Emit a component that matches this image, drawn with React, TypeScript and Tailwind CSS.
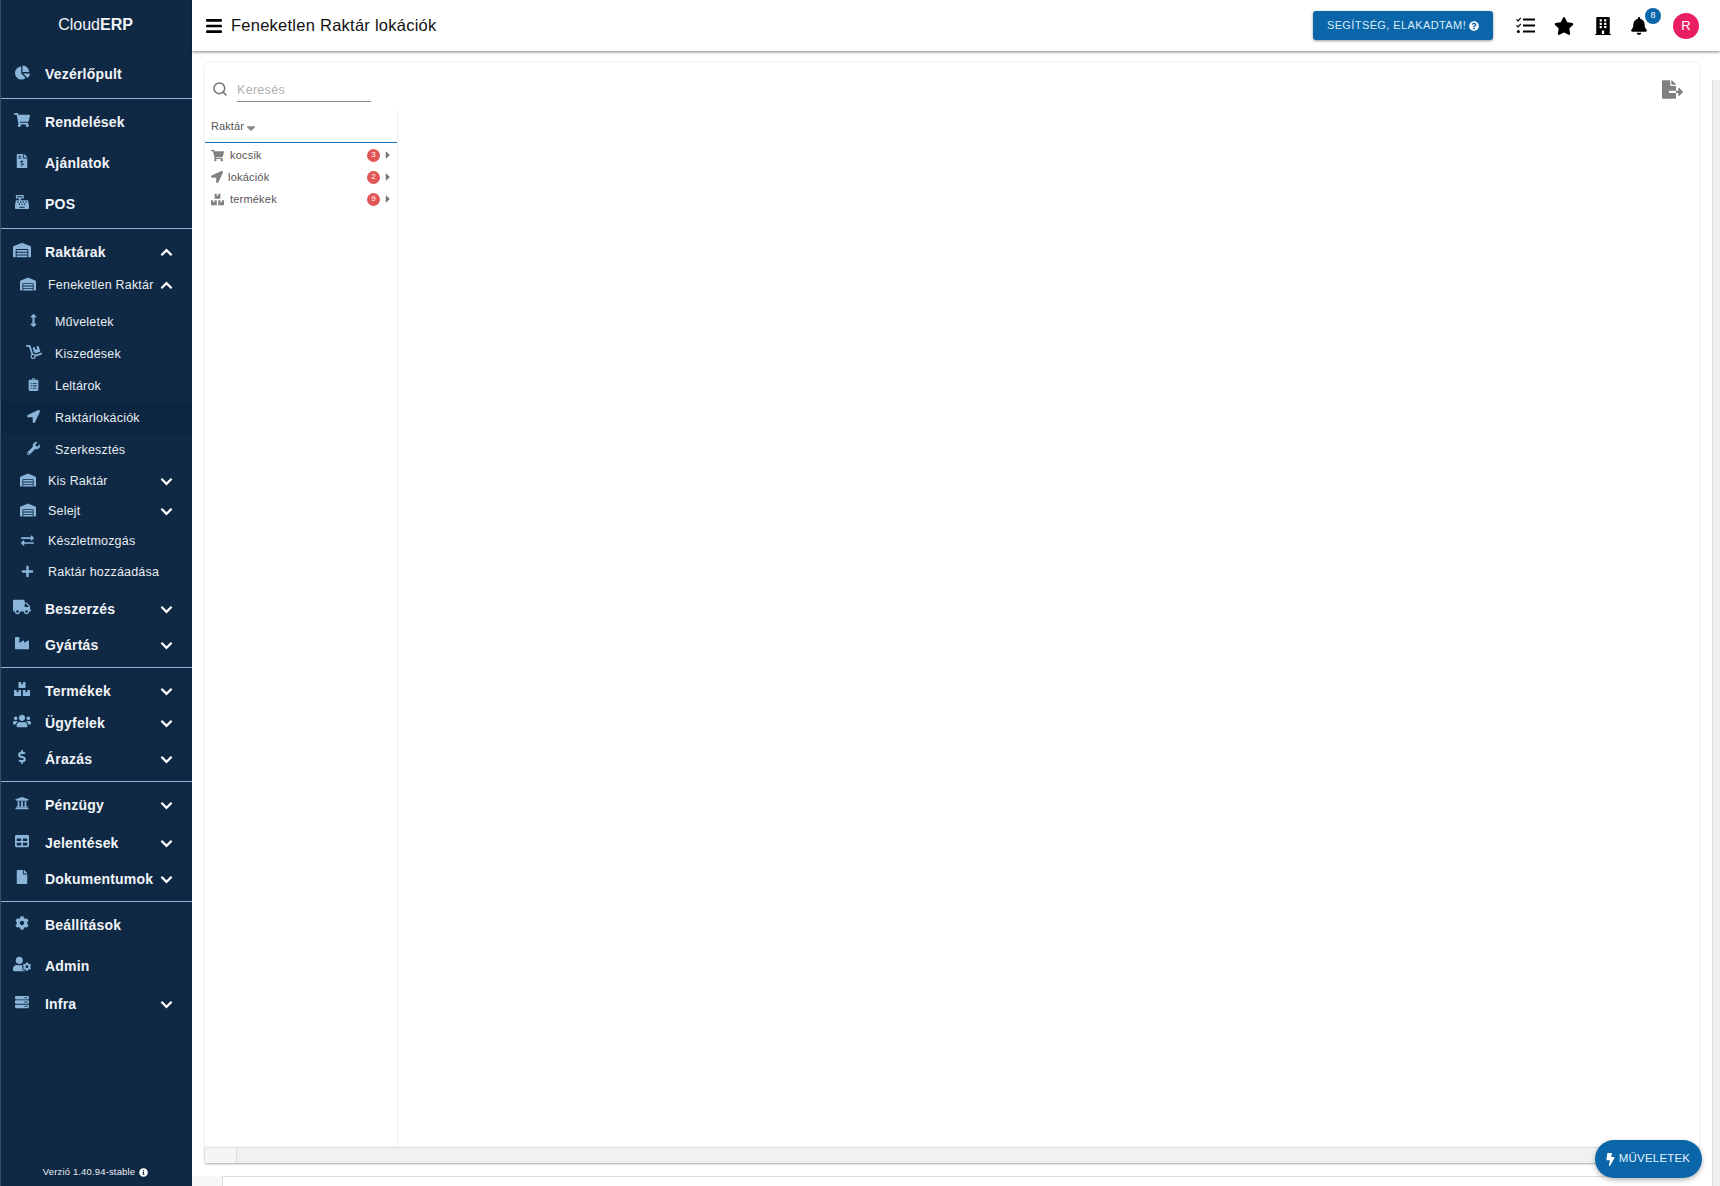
import React from 'react';
import { FaChartPie, FaShoppingCart, FaFileInvoiceDollar, FaCashRegister, FaWarehouse, FaArrowsAltV, FaDolly, FaClipboardList, FaLocationArrow, FaWrench, FaExchangeAlt, FaPlus, FaTruck, FaIndustry, FaBoxes, FaUsers, FaDollarSign, FaUniversity, FaTable, FaFile, FaCog, FaUserCog, FaServer, FaInfoCircle, FaQuestionCircle, FaStar, FaBuilding, FaBell, FaBolt, FaFileExport, FaBars, FaCaretDown, FaCaretRight } from 'react-icons/fa';
import { Search } from 'lucide-react';

type I = React.ComponentType<{ className?: string }>;

const Chevron = ({ up }: { up?: boolean }) => (
  <svg viewBox="0 0 14 9" className="w-[13px] h-[9px] shrink-0 absolute right-[19px] text-white" fill="none" stroke="currentColor" strokeWidth="2.4">
    <path d={up ? 'M1.5 7.5 7 2l5.5 5.5' : 'M1.5 1.5 7 7l5.5-5.5'} />
  </svg>
);

const Main = ({ icon: Icon, label, h, chev, up, s = 'text-[14px]' }: { icon: I; label: string; h: number; chev?: boolean; up?: boolean; s?: string }) => (
  <div className="relative flex items-center shrink-0" style={{ height: h }}>
    <div className="w-[44px] flex justify-center pr-[2px] shrink-0"><Icon className={`${s} text-[#8ab4d8] -translate-y-[2px]`} /></div>
    <span className="text-[14px] font-bold text-[#f2f5f8] tracking-[0.2px]">{label}</span>
    {chev && <Chevron up={up} />}
  </div>
);

const Sub = ({ icon: Icon, label, h, chev, up, s = 'text-[13px]' }: { icon: I; label: string; h: number; chev?: boolean; up?: boolean; s?: string }) => (
  <div className="relative flex items-center shrink-0" style={{ height: h }}>
    <div className="w-[47px] pl-[6px] flex justify-center shrink-0"><Icon className={`${s} text-[#8ab4d8] -translate-y-[1px]`} /></div>
    <span className="text-[12.5px] text-[#e8edf2] tracking-[0.2px]">{label}</span>
    {chev && <Chevron up={up} />}
  </div>
);

const Leaf = ({ icon: Icon, label, active, s = 'text-[13px]' }: { icon: I; label: string; active?: boolean; s?: string }) => (
  <div className={`flex items-center h-[32px] shrink-0 ${active ? 'bg-[#0c2540]' : ''}`}>
    <div className="w-[54px] pl-[11px] flex justify-center shrink-0"><Icon className={`${s} text-[#8ab4d8] -translate-y-[2px]`} /></div>
    <span className="text-[12.5px] text-[#e8edf2] tracking-[0.2px]">{label}</span>
  </div>
);

const Rule = () => <div className="h-px bg-[#8db4d6] shrink-0" />;

const Row = ({ icon: Icon, label, n, gap, s = 'text-[13px]' }: { icon: I; label: string; n: number; gap: string; s?: string }) => (
  <div className="flex items-center h-[22px] pl-[6px] pr-[3px] text-[#555]">
    <Icon className={`${s} text-[#808080] shrink-0`} />
    <span className={`text-[11px] ${gap} text-[#555] tracking-[0.2px]`}>{label}</span>
    <span className="ml-auto w-[13px] h-[13px] rounded-full bg-[#e25555] text-white text-[8px] flex items-center justify-center">{n}</span>
    <FaCaretRight className="text-[12px] text-[#777] ml-[2px]" />
  </div>
);

const Checklist = () => (
  <svg viewBox="0 0 19 17" className="ml-[23px] w-[19px] h-[17px] text-black" fill="none" stroke="currentColor">
    <path d="M7 2.5h12M7 8.5h12M7 14.5h12" strokeWidth="1.8" />
    <path d="M.5 2.3 2 3.8 4.8.8M.5 8.3 2 9.8 4.8 6.8" strokeWidth="1.2" />
    <circle cx="2.4" cy="14.5" r="1.5" fill="currentColor" stroke="none" />
  </svg>
);

export default function App() {
  return (
    <div className="flex h-[1186px] w-[1720px] overflow-hidden bg-white font-['Liberation_Sans',Arial,sans-serif]">
      <aside className="w-[192px] shrink-0 h-full bg-[#0f2945] border-l border-[#3d4f63] flex flex-col">
        <div className="h-[50px] flex items-center justify-center shrink-0 text-[16px] text-[#f2f5f8] pr-[2px]">Cloud<b>ERP</b></div>
        <Main icon={FaChartPie} label="Vezérlőpult" h={48} s="text-[15px]" />
        <Rule />
        <Main icon={FaShoppingCart} label="Rendelések" h={46} s="text-[16px]" />
        <Main icon={FaFileInvoiceDollar} label="Ajánlatok" h={36} />
        <Main icon={FaCashRegister} label="POS" h={46} />
        <div className="h-[1px] shrink-0" />
        <Rule />
        <Main icon={FaWarehouse} label="Raktárak" h={46} chev up s="text-[18px]" />
        <Sub icon={FaWarehouse} label="Feneketlen Raktár" h={20} chev up s="text-[16px]" />
        <div className="h-[11px] shrink-0" />
        <Leaf icon={FaArrowsAltV} label="Műveletek" />
        <Leaf icon={FaDolly} label="Kiszedések" s="text-[16px]" />
        <Leaf icon={FaClipboardList} label="Leltárok" />
        <Leaf icon={FaLocationArrow} label="Raktárlokációk" active />
        <Leaf icon={FaWrench} label="Szerkesztés" />
        <Sub icon={FaWarehouse} label="Kis Raktár" h={30} chev s="text-[16px]" />
        <Sub icon={FaWarehouse} label="Selejt" h={30} chev s="text-[16px]" />
        <Sub icon={FaExchangeAlt} label="Készletmozgás" h={30} />
        <Sub icon={FaPlus} label="Raktár hozzáadása" h={32} />
        <Main icon={FaTruck} label="Beszerzés" h={42} chev s="text-[18px]" />
        <Main icon={FaIndustry} label="Gyártás" h={30} chev />
        <div className="h-[7px] shrink-0" />
        <Rule />
        <div className="h-[3px] shrink-0" />
        <Main icon={FaBoxes} label="Termékek" h={40} chev s="text-[16px]" />
        <Main icon={FaUsers} label="Ügyfelek" h={24} chev s="text-[18px]" />
        <div className="h-[2px] shrink-0" />
        <Main icon={FaDollarSign} label="Árazás" h={44} chev />
        <Rule />
        <Main icon={FaUniversity} label="Pénzügy" h={46} chev />
        <Main icon={FaTable} label="Jelentések" h={30} chev />
        <Main icon={FaFile} label="Dokumentumok" h={42} chev />
        <div className="h-[1px] shrink-0" />
        <Rule />
        <Main icon={FaCog} label="Beállítások" h={46} />
        <Main icon={FaUserCog} label="Admin" h={36} s="text-[18px]" />
        <Main icon={FaServer} label="Infra" h={40} chev />
        <div className="mt-auto h-[28px] flex items-center justify-center gap-[4px] text-[9.5px] text-[#e8edf2] tracking-[0.15px] pr-[2px]">
          <span>Verzió 1.40.94-stable</span><FaInfoCircle className="text-[9px] text-white" />
        </div>
      </aside>

      <div className="relative flex-1 flex flex-col min-w-0 bg-white">
        <header className="h-[51px] shrink-0 flex items-center bg-white shadow-[0_1px_3px_rgba(0,0,0,0.5)] z-10 pl-[13px]">
          <FaBars className="text-[18px] text-black" />
          <h1 className="ml-[8px] text-[16.5px] text-[#111] tracking-[0.25px]">Feneketlen Raktár lokációk</h1>
          <div className="ml-auto flex items-center">
            <button className="h-[29px] w-[180px] rounded-[3px] bg-[#0a66a8] text-[#d9ecfa] text-[11px] tracking-[0.4px] flex items-center justify-center gap-[3px] shadow-[0_1px_3px_rgba(0,0,0,0.4)]">
              SEGÍTSÉG, ELAKADTAM! <FaQuestionCircle className="text-[10px] text-white" />
            </button>
            <Checklist />
            <FaStar className="ml-[19px] text-[20px] text-black" />
            <FaBuilding className="ml-[20px] text-[18px] text-black" />
            <div className="relative ml-[18px]">
              <FaBell className="text-[18px] text-black" />
              <span className="absolute -top-[9px] left-[15px] w-[16px] h-[16px] rounded-full bg-[#0a66a8] text-white text-[9px] flex items-center justify-center">8</span>
            </div>
            <div className="ml-[25px] mr-[21px] w-[26px] h-[26px] rounded-full bg-[#e91e63] text-white text-[13px] flex items-center justify-center">R</div>
          </div>
        </header>

        <div className="flex-1 min-h-0 relative bg-white pl-[13px] pr-[20px] pt-[12px]">
          <section className="h-[1100px] w-[1494px] bg-white rounded-[4px] shadow-[0_0_3px_rgba(0,0,0,0.12)] flex flex-col">
            <div className="h-[48px] shrink-0 flex items-center pl-[7px] pr-[16px] pt-[4px]">
              <Search className="w-[16px] h-[16px] text-[#707070]" strokeWidth={2.2} />
              <div className="ml-[9px] w-[134px] h-[25px] border-b border-[#909090] text-[12.5px] text-[#b0b0b0] flex items-center pt-[3px] tracking-[0.3px]">Keresés</div>
              <FaFileExport className="ml-auto text-[21px] text-[#808080]" />
            </div>
            <div className="w-[193px] flex-1 min-h-0 border-r border-[#f0f0f0]">
              <div className="h-[32px] border-b border-[#1477ba] flex items-center pl-[6px] text-[11px] text-[#555] tracking-[0.1px]">
                Raktár <FaCaretDown className="text-[14px] text-[#888] mt-[3px]" />
              </div>
              <div className="pt-[1px]">
                <Row icon={FaShoppingCart} label="kocsik" n={3} gap="ml-[6px]" />
                <Row icon={FaLocationArrow} label="lokációk" n={2} gap="ml-[5px]" s="text-[12px]" />
                <Row icon={FaBoxes} label="termékek" n={9} gap="ml-[6px]" />
              </div>
            </div>
            <div className="h-[16px] shrink-0 flex border-t border-[#e0e0e0] shadow-[0_1px_2px_rgba(0,0,0,0.3)]">
              <div className="w-[31px] bg-[#f5f5f5]" />
              <div className="flex-1 bg-[#f1f1f1] border-l border-[#ddd]" />
            </div>
          </section>
          <div className="absolute left-0 bottom-0 w-[30px] h-[10px] bg-[#f7f7f7]" />
          <div className="absolute left-[30px] right-[38px] bottom-0 h-[10px] bg-white border-t border-l border-[#ddd]" />
          <div className="absolute right-0 top-[29px] bottom-0 w-[8px] bg-[#f0f0f0] border-l border-[#e0e0e0]" />
        </div>

        <button className="absolute right-[18px] bottom-[8px] w-[107px] h-[38px] rounded-full bg-[#0a66a8] text-[#e3f1fb] text-[11.5px] tracking-[0.2px] flex items-center justify-center gap-[2px] pr-[3px] shadow-[0_2px_5px_rgba(0,0,0,0.3)] z-20">
          <FaBolt className="text-[13px] text-white" /> MŰVELETEK
        </button>
      </div>
    </div>
  );
}
